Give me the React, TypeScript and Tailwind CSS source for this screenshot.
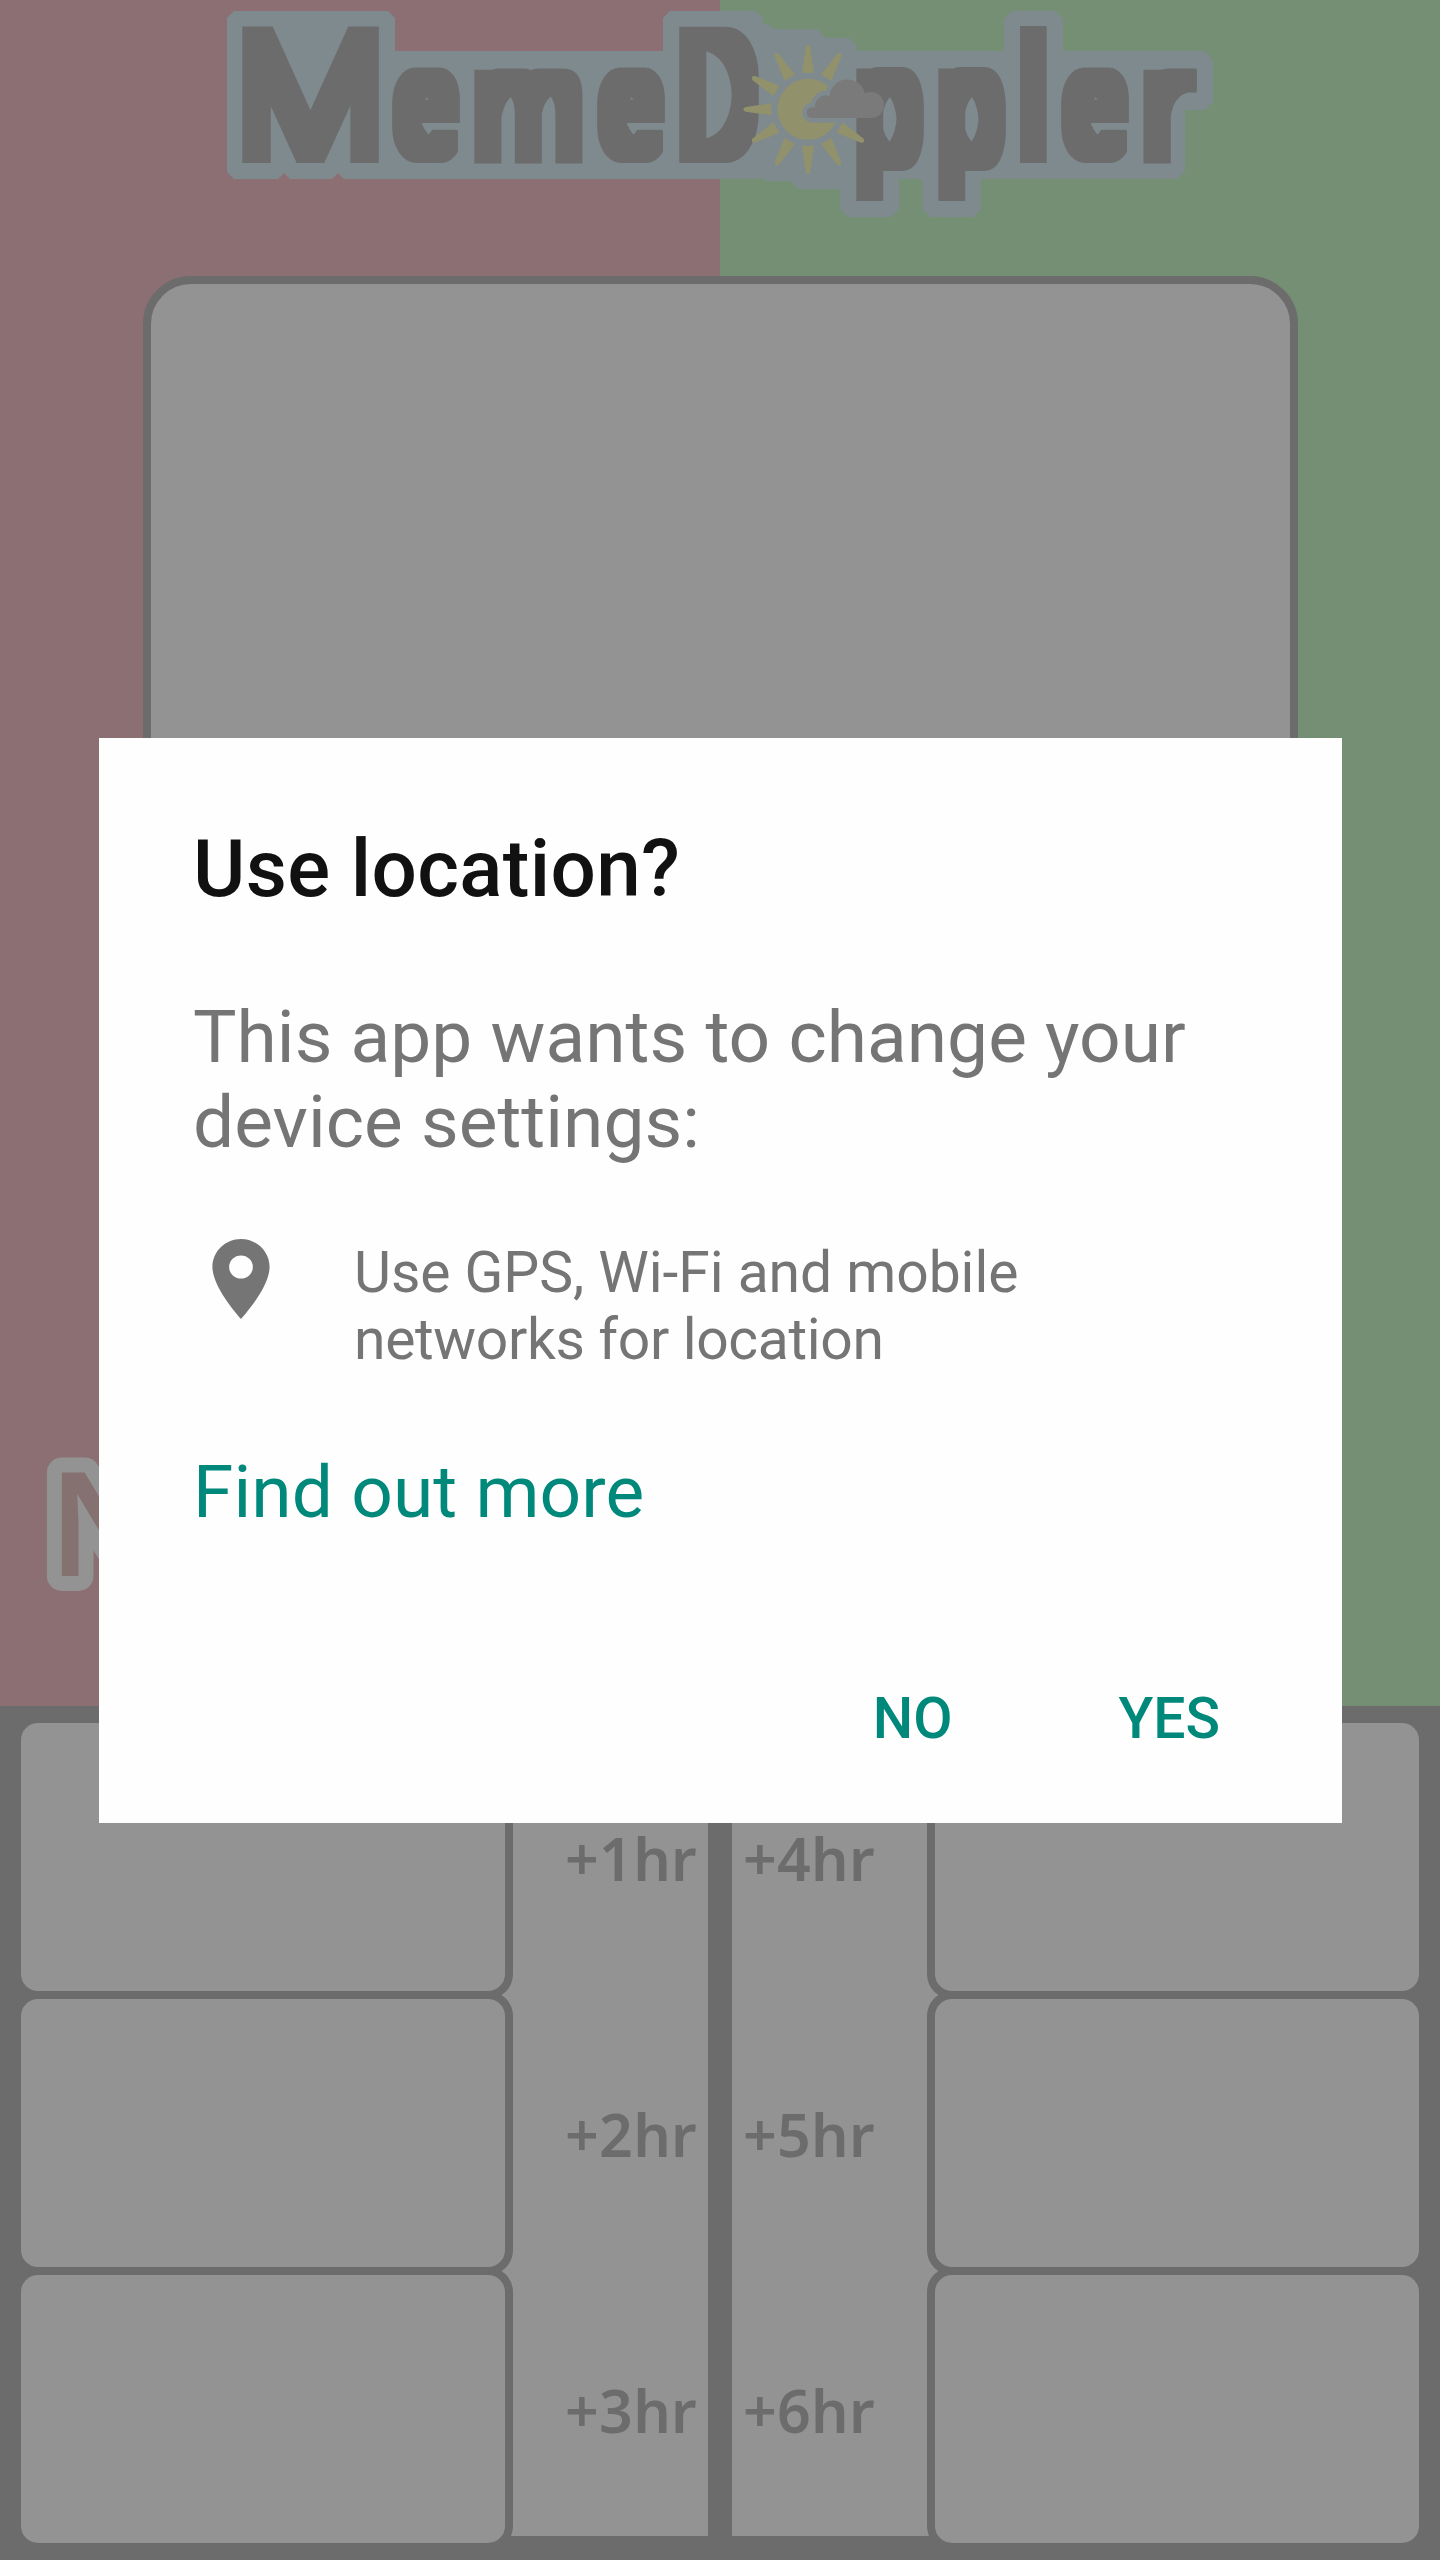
import React from "react";

type Box = { ch: string; x: number; y: number; w: number; h: number };

const LETTERS: Box[] = [
  { ch: "M", x: 242, y: 26, w: 137, h: 137 },
  { ch: "e", x: 392, y: 67, w: 68, h: 96 },
  { ch: "m", x: 474, y: 67, w: 109, h: 96 },
  { ch: "e", x: 597, y: 67, w: 68, h: 96 },
  { ch: "D", x: 679, y: 26, w: 80, h: 137 },
  { ch: "p", x: 856, y: 67, w: 68, h: 135 },
  { ch: "p", x: 938, y: 67, w: 68, h: 135 },
  { ch: "l", x: 1020, y: 26, w: 27, h: 137 },
  { ch: "e", x: 1061, y: 67, w: 68, h: 96 },
  { ch: "r", x: 1143, y: 67, w: 54, h: 96 },
];

// How far the square brush thickens each letter on every side.
const RX = 12;
const RY = 10;

const pen = document.createElement("canvas").getContext("2d")!;

// Scales one character so that its thickened ink fills the given box.
function FittedLetter({ ch, x, y, w, h }: Box) {
  pen.font = "100 200px Roboto";
  const m = pen.measureText(ch);
  const inkW = m.actualBoundingBoxRight + m.actualBoundingBoxLeft;
  const inkH = m.actualBoundingBoxAscent + m.actualBoundingBoxDescent;
  const sx = (w - RX * 2) / inkW;
  const sy = (h - RY * 2) / inkH;
  const tx = x + RX + m.actualBoundingBoxLeft * sx;
  const ty = y + RY + m.actualBoundingBoxAscent * sy;
  return (
    <text
      transform={`translate(${tx} ${ty}) scale(${sx} ${sy})`}
      fontFamily="Roboto, sans-serif"
      fontWeight="100"
      fontSize="200"
      fill="#6c6c6c"
    >
      {ch}
    </text>
  );
}

const CLOUD =
  "M812 118A5.3 5.3 0 0 1 811 107.5L815 107.5A11 11 0 0 1 829.5 96A18 18 0 0 1 865 93.5A13 13 0 1 1 870 118Z";

function Logo() {
  return (
    <svg className="h-[230px] w-[1440px]" viewBox="0 0 1440 230" aria-label="MemeDoppler">
      <path
        fill="#7f8a8f"
        d="M234 11H388L395 18V51H663V18L670 11H756L763 18V24H768L774 29H817L826 38H849L857 46V51H1004V19L1012 11H1055L1063 19V51H1205L1213 60V102L1205 110H1185V171L1177 179H981V209L974 217H930L922 209V179H899V209L891 217H848L840 209V189H798L789 180L786 181H767L762 178L755 179H344L338 173L332 179H290L284 173L278 179H234L227 172V18Z"
      />
      <filter
        id="square-brush"
        filterUnits="userSpaceOnUse"
        x="200"
        y="0"
        width="1040"
        height="230"
        colorInterpolationFilters="sRGB"
      >
        <feMorphology operator="dilate" radius="12 10" />
      </filter>
      <g filter="url(#square-brush)">
        {LETTERS.map((l, i) => (
          <FittedLetter key={i} {...l} />
        ))}
      </g>
      <mask id="behind-cloud" maskUnits="userSpaceOnUse" x="700" y="0" width="220" height="230">
        <rect x="700" y="0" width="220" height="230" fill="#fff" />
        <path d={CLOUD} fill="#000" stroke="#000" strokeWidth="9" />
      </mask>
      <g mask="url(#behind-cloud)" fill="#91916b">
        <circle cx="808" cy="109.3" r="30.5" />
        {[0, 30, 120, 150, 180, 210, 240, 270, 300, 330].map((a) => (
          <path
            key={a}
            transform={`translate(808 109.3) rotate(${a})`}
            d="M-6 -36.5L-2.4 -62.5Q0 -67 2.4 -62.5L6 -36.5Z"
          />
        ))}
      </g>
      <path d={CLOUD} fill="#7a7a7a" />
    </svg>
  );
}

function Cells({ side }: { side: "left" | "right" }) {
  return (
    <div className={side === "left" ? "z-10 ml-[13px] mt-[9px] w-[500px] shrink-0" : "z-10 mt-[9px] w-[500px] shrink-0"}>
      {[0, 1, 2].map((i) => (
        <div
          key={i}
          className="-mb-2 h-[284px] rounded-[25px] border-8 border-[#6c6c6c] bg-[#939393]"
        />
      ))}
    </div>
  );
}

function Hours({ labels, side }: { labels: string[]; side: "left" | "right" }) {
  return (
    <div
      className={
        side === "left"
          ? "-ml-6 h-[821px] w-[219px] shrink-0 bg-[#939393] pr-[11px] pt-[93px] text-right"
          : "-mr-6 h-[821px] w-[219px] shrink-0 bg-[#939393] pl-[11px] pt-[93px]"
      }
    >
      {labels.map((t) => (
        <div
          key={t}
          className="h-[276px] whitespace-nowrap font-['Noto_Sans'] text-[59px] font-semibold leading-[100px] tracking-[0.3px] text-[#6c6c6c]"
        >
          {t}
        </div>
      ))}
    </div>
  );
}

function Dialog() {
  return (
    <div className="absolute left-[99px] top-[738px] z-20 h-[1085px] w-[1243px] bg-[#fefefe] pl-[94px] pt-[84px] font-['Roboto'] text-[#757575]">
      <h1 className="whitespace-nowrap text-[80px] font-medium leading-[94px] tracking-[0.35px] text-[#111]">
        Use location?
      </h1>
      <p className="mt-[79px] whitespace-nowrap text-[73px] leading-[85px] tracking-[0.05px]">
        This app wants to change your
        <br />
        device settings:
      </p>
      <div className="mt-[74px] flex">
        <svg className="-ml-px -mt-[8px] h-[96px] w-[98px] shrink-0" viewBox="0 0 24 24" preserveAspectRatio="none">
          <path
            fill="#757575"
            fillRule="evenodd"
            d="M12 2C8.13 2 5 5.13 5 9c0 5.25 7 13 7 13s7-7.75 7-13c0-3.87-3.13-7-7-7zM12 6.1a2.9 2.9 0 1 0 0 5.8a2.9 2.9 0 1 0 0-5.8z"
          />
        </svg>
        <div className="ml-[64px] whitespace-nowrap text-[57px] leading-[67px]">
          <p className="tracking-[-0.05px]">Use GPS, Wi-Fi and mobile</p>
          <p className="tracking-[-0.35px]">networks for location</p>
        </div>
      </div>
      <a className="mt-[77px] block whitespace-nowrap text-[73px] leading-[85px] tracking-[0.1px] text-[#00897b]">
        Find out more
      </a>
      <div className="mt-[150px] flex justify-end gap-[166px] pr-[122px] text-[57px] font-medium leading-[67px] text-[#00897b]">
        <button>NO</button>
        <button>YES</button>
      </div>
    </div>
  );
}

export default function App() {
  return (
    <div className="relative h-[2560px] w-[1440px] overflow-hidden bg-[#6c6c6c]">
      <div className="flex h-[1706px] flex-col bg-linear-to-r from-[#8b6f73] from-50% to-[#748f74] to-50%">
        <Logo />
        <div className="ml-[143px] mt-[46px] h-[1000px] w-[1155px] shrink-0 rounded-[48px] border-8 border-[#6c6c6c] bg-[#939393]" />
        <svg className="mt-[160px] h-[180px] w-[300px]" viewBox="0 0 300 180">
          <text
            x="48.5"
            y="140"
            fontFamily="'Noto Sans', sans-serif"
            fontWeight="600"
            fontSize="144"
            fill="#85716f"
            stroke="#939393"
            strokeWidth="30"
            strokeLinejoin="round"
            paintOrder="stroke"
          >
            N
          </text>
        </svg>
      </div>
      <div className="flex h-[854px]">
        <Cells side="left" />
        <div className="flex w-[414px] shrink-0 pt-[9px]">
          <Hours side="left" labels={["+1hr", "+2hr", "+3hr"]} />
          <div className="w-6 shrink-0" />
          <Hours side="right" labels={["+4hr", "+5hr", "+6hr"]} />
        </div>
        <Cells side="right" />
      </div>
      <Dialog />
    </div>
  );
}
